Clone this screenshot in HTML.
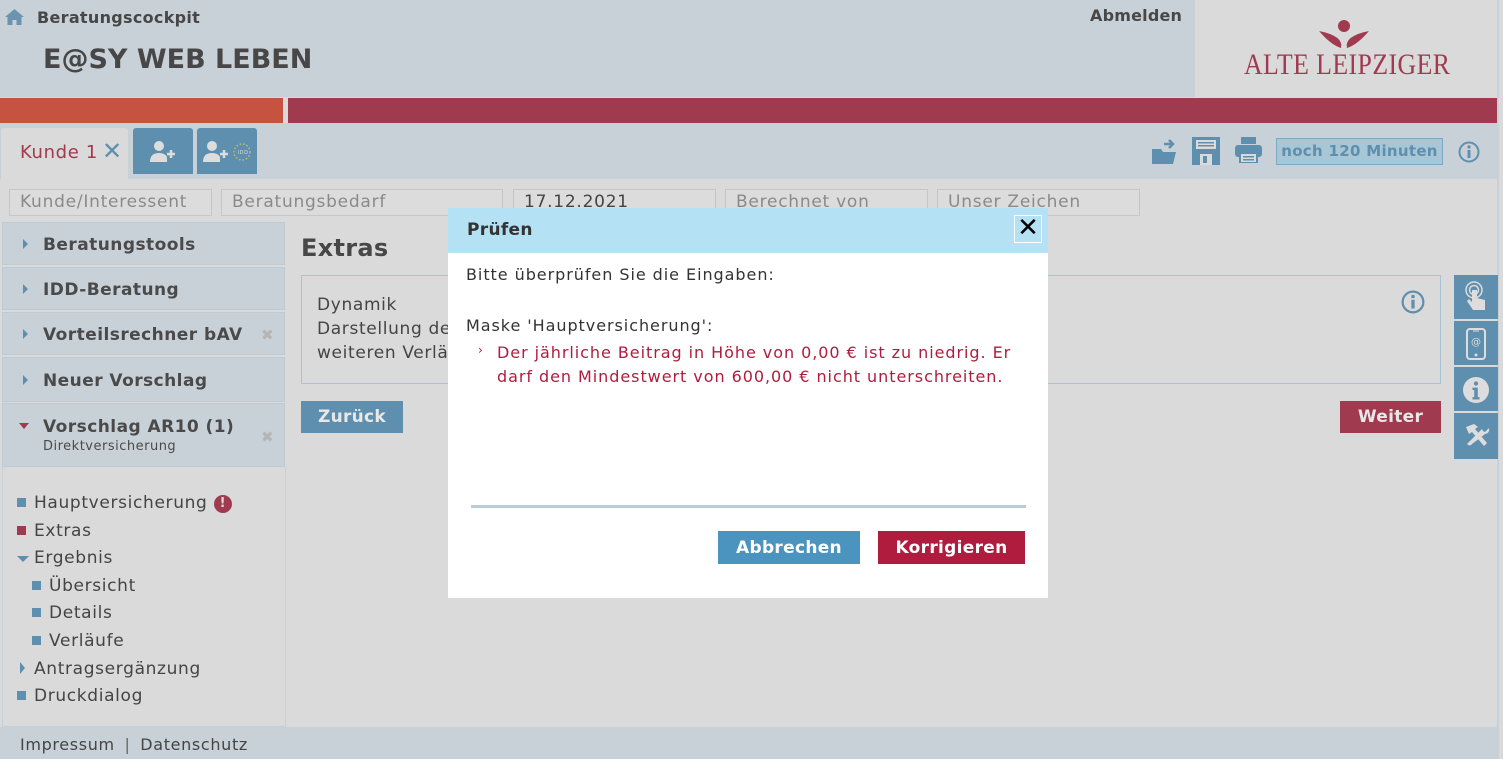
<!DOCTYPE html>
<html><head><meta charset="utf-8"><style>
*{box-sizing:border-box;margin:0;padding:0}
body{width:1503px;height:759px;overflow:hidden;background:#dadada;font-family:"DejaVu Sans","Liberation Sans",sans-serif;color:#444;position:relative;letter-spacing:0.65px}
.abs{position:absolute}
.hdr{left:0;top:0;width:1195px;height:97px;background:#c9d1d8}
.logo{left:1195px;top:0;width:303px;height:97px;background:#dadada}
.bar1{left:0;top:98px;width:283px;height:25px;background:#c5533f}
.bar2{left:288px;top:98px;width:1210px;height:25px;background:#a03a4f}
.tabs{left:0;top:123px;width:1498px;height:56px;background:#c9d1d8}
.rline{left:1497px;top:0;width:2px;height:759px;background:#c9d1d8}
.fld{top:189px;height:27px;border:1px solid #c6c6c6;background:#dcdcdc;color:#8a8a8a;font-size:17px;padding:2px 10px;letter-spacing:0.75px}
.acc{left:2px;width:283px;background:#c9d1d8;border:1px solid #bfcad2;font-weight:bold;font-size:17px;color:#4a4a4a;padding-left:40px;letter-spacing:0.45px}
.tri{position:absolute;left:20px;top:14px;width:0;height:0;border-left:5px solid #5e8fae;border-top:5px solid transparent;border-bottom:5px solid transparent}
.x{position:absolute;right:10px;color:#b5b5b5;font-size:15px}
.nav{font-size:17px;color:#444;position:absolute;margin-top:2px}
.sq{display:inline-block;width:9px;height:9px;background:#5e8fae;margin-right:8px;vertical-align:1px}
.btn{font-weight:bold;font-size:17px;color:#e8e8e8;text-align:center;letter-spacing:0.3px}
.side{left:1454px;width:44px;background:#5e8fae;height:44px}
.m{letter-spacing:0.95px}
</style></head><body>
<div class="abs hdr"></div>
<svg class="abs" style="left:5px;top:9px" width="19" height="16" viewBox="0 0 19 16"><path d="M9.5 0L0 8h2.5v8h5v-5h4v5h5V8H19z" fill="#6b94b0"/></svg>
<div class="abs" style="left:37px;top:8px;font-weight:bold;font-size:16px;color:#474747;letter-spacing:0.3px">Beratungscockpit</div>
<div class="abs" style="left:43px;top:44px;font-weight:bold;font-size:27px;color:#474747;letter-spacing:0px">E@SY WEB LEBEN</div>
<div class="abs" style="left:1090px;top:6px;font-weight:bold;font-size:16px;color:#474747;letter-spacing:0.2px">Abmelden</div>
<div class="abs logo"></div>
<svg class="abs" style="left:1315px;top:18px" width="58" height="30" viewBox="0 0 58 30"><circle cx="29" cy="8" r="6" fill="#a03a4f"/><path d="M4 13q25 5 22 17q-10-3-22-17zM54 13q-25 5-22 17q10-3 22-17z" fill="#a03a4f"/></svg>
<div class="abs" style="left:1244px;top:48px;font-family:'Liberation Serif',serif;font-size:30px;color:#a03a4f;letter-spacing:0.5px;transform:scaleX(.86);transform-origin:left;white-space:nowrap">ALTE LEIPZIGER</div>
<div class="abs bar1"></div><div class="abs bar2"></div>
<div class="abs tabs"></div>
<div class="abs rline"></div>
<div class="abs" style="left:1px;top:128px;width:127px;height:51px;background:#dadada;border-radius:3px 3px 0 0"></div>
<div class="abs" style="left:20px;top:142px;font-size:18px;color:#a03a4f">Kunde 1</div>
<div class="abs" style="left:102px;top:137px;font-size:24px;color:#5e8fae">✕</div>
<div class="abs" style="left:133px;top:128px;width:60px;height:46px;background:#5e8fae;border-radius:3px 3px 0 0"></div>
<div class="abs" style="left:197px;top:128px;width:60px;height:46px;background:#5e8fae;border-radius:3px 3px 0 0"></div>
<svg class="abs" style="left:150px;top:140px" width="26" height="22" viewBox="0 0 26 22"><circle cx="9" cy="6" r="5" fill="#ddd"/><path d="M0 22q0-9 9-9q6 0 8 4v5z" fill="#ddd"/><path d="M17 14h8M21 10v8" stroke="#ddd" stroke-width="2.5"/></svg>
<svg class="abs" style="left:203px;top:140px" width="50" height="22" viewBox="0 0 50 22"><circle cx="9" cy="6" r="5" fill="#ddd"/><path d="M0 22q0-9 9-9q6 0 8 4v5z" fill="#ddd"/><path d="M17 14h8M21 10v8" stroke="#ddd" stroke-width="2.5"/><circle cx="39" cy="12" r="8" fill="none" stroke="#c8c070" stroke-width="1.4" stroke-dasharray="1.5 2"/><text x="34.5" y="14" font-size="5" fill="#ddd">IDD</text></svg>
<svg class="abs" style="left:1152px;top:137px" width="26" height="27" viewBox="0 0 26 27"><path d="M0 12h9l2 3h13l-3 12H0z" fill="#5e8fae"/><path d="M12 7h8M17 3l4 4-4 4" stroke="#5e8fae" stroke-width="2.5" fill="none"/></svg>
<svg class="abs" style="left:1192px;top:137px" width="28" height="28" viewBox="0 0 28 28"><path d="M0 0h28v28H0z" fill="#5e8fae"/><rect x="4" y="3" width="20" height="9" fill="#dadada"/><rect x="6" y="5" width="16" height="1.5" fill="#5e8fae"/><rect x="6" y="8" width="16" height="1.5" fill="#5e8fae"/><rect x="8" y="17" width="12" height="11" fill="#dadada"/><rect x="11" y="19" width="4" height="7" fill="#5e8fae"/></svg>
<svg class="abs" style="left:1235px;top:137px" width="27" height="26" viewBox="0 0 27 26"><rect x="6" y="0" width="15" height="7" fill="#5e8fae"/><rect x="0" y="8" width="27" height="12" rx="3" fill="#5e8fae"/><rect x="5" y="16" width="17" height="10" fill="#dadada" stroke="#5e8fae" stroke-width="2"/><rect x="8" y="19" width="11" height="1.5" fill="#5e8fae"/><rect x="8" y="22" width="11" height="1.5" fill="#5e8fae"/></svg>
<div class="abs" style="left:1276px;top:138px;width:167px;height:27px;background:#a7c6d6;border:1px solid #7fa9c2;color:#5e8fae;font-weight:bold;font-size:15px;text-align:center;line-height:25px;letter-spacing:0.3px">noch 120 Minuten</div>
<svg class="abs" style="left:1458px;top:141px" width="22" height="22" viewBox="0 0 22 22"><circle cx="11" cy="11" r="9.5" fill="none" stroke="#5e8fae" stroke-width="2"/><circle cx="11" cy="6" r="1.6" fill="#5e8fae"/><rect x="9.5" y="9" width="3" height="8" fill="#5e8fae"/></svg>

<div class="abs fld" style="left:9px;width:203px">Kunde/Interessent</div>
<div class="abs fld" style="left:221px;width:282px">Beratungsbedarf</div>
<div class="abs fld" style="left:513px;width:203px;color:#444">17.12.2021</div>
<div class="abs fld" style="left:725px;width:203px">Berechnet von</div>
<div class="abs fld" style="left:937px;width:203px">Unser Zeichen</div>

<div class="abs acc" style="top:222px;height:43px;line-height:45px"><span class="tri" style="top:16px"></span>Beratungstools</div>
<div class="abs acc" style="top:267px;height:43px;line-height:45px"><span class="tri" style="top:16px"></span>IDD-Beratung</div>
<div class="abs acc" style="top:312px;height:43px;line-height:45px"><span class="tri" style="top:16px"></span>Vorteilsrechner bAV<span class="x">✖</span></div>
<div class="abs acc" style="top:357px;height:45px;line-height:47px"><span class="tri" style="top:17px"></span>Neuer Vorschlag</div>
<div class="abs acc" style="top:403px;height:64px;padding-top:13px"><span style="position:absolute;left:16px;top:19px;border-top:6px solid #a03a4f;border-left:5px solid transparent;border-right:5px solid transparent"></span>Vorschlag AR10 (1)<div style="font-weight:normal;font-size:13px;margin-top:2px;letter-spacing:0.5px">Direktversicherung</div><span class="x" style="top:24px">✖</span></div>
<div class="abs" style="left:2px;top:467px;width:284px;height:260px;border:1px solid #c6d0d8;border-top:none"></div>
<div class="nav" style="left:17px;top:491px"><span class="sq"></span>Hauptversicherung <span style="display:inline-block;width:18px;height:18px;border-radius:50%;background:#a03a4f;color:#ddd;font-size:13px;text-align:center;line-height:18px;font-weight:bold;vertical-align:1px;letter-spacing:0">!</span></div>
<div class="nav" style="left:17px;top:519px"><span class="sq" style="background:#a03a4f"></span>Extras</div>
<div class="nav" style="left:17px;top:546px"><span style="display:inline-block;border-top:6px solid #5e8fae;border-left:6px solid transparent;border-right:6px solid transparent;margin-right:5px;vertical-align:1px"></span>Ergebnis</div>
<div class="nav" style="left:32px;top:574px"><span class="sq"></span>Übersicht</div>
<div class="nav" style="left:32px;top:601px"><span class="sq"></span>Details</div>
<div class="nav" style="left:32px;top:629px"><span class="sq"></span>Verläufe</div>
<div class="nav" style="left:20px;top:657px"><span style="display:inline-block;border-left:5px solid #5e8fae;border-top:6px solid transparent;border-bottom:6px solid transparent;margin-right:9px;vertical-align:0px"></span>Antragsergänzung</div>
<div class="nav" style="left:17px;top:684px"><span class="sq"></span>Druckdialog</div>
<div class="abs" style="left:0;top:727px;width:1498px;height:32px;background:#c9d1d8"></div>
<div class="abs" style="left:20px;top:735px;font-size:16px;color:#444">Impressum <span style="color:#666;margin:0 4px">|</span> Datenschutz</div>

<div class="abs" style="left:301px;top:234px;font-weight:bold;font-size:24px;color:#474747;letter-spacing:0.3px">Extras</div>
<div class="abs" style="left:301px;top:275px;width:1140px;height:109px;border:1px solid #a8c3d3;background:#dadada"></div>
<div class="abs" style="left:317px;top:293px;font-size:17px;line-height:24px;color:#444">Dynamik<br>Darstellung de<br>weiteren Verlä</div>
<svg class="abs" style="left:1401px;top:290px" width="24" height="24" viewBox="0 0 22 22"><circle cx="11" cy="11" r="9.5" fill="none" stroke="#5e8fae" stroke-width="2"/><circle cx="11" cy="6" r="1.6" fill="#5e8fae"/><rect x="9.5" y="9" width="3" height="8" fill="#5e8fae"/></svg>
<div class="abs btn" style="left:301px;top:401px;width:102px;height:32px;line-height:32px;background:#5e8fae">Zurück</div>
<div class="abs btn" style="left:1340px;top:401px;width:101px;height:32px;line-height:32px;background:#a03a4f">Weiter</div>
<div class="abs side" style="top:275px"></div>
<div class="abs side" style="top:321px"></div>
<div class="abs side" style="top:367px"></div>
<div class="abs side" style="top:413px;height:46px"></div>
<svg class="abs" style="left:1464px;top:280px" width="24" height="34" viewBox="0 0 24 34"><circle cx="10" cy="10" r="8" fill="none" stroke="#ddd" stroke-width="1.5"/><circle cx="10" cy="10" r="4.5" fill="none" stroke="#ddd" stroke-width="1.5"/><path d="M8 10v12l-3-3-2 2 6 9h12v-10l-8-2v-8z" fill="#ddd"/></svg>
<svg class="abs" style="left:1466px;top:328px" width="20" height="32" viewBox="0 0 20 32"><rect x="1" y="1" width="18" height="30" rx="3" fill="none" stroke="#ddd" stroke-width="2"/><rect x="7" y="2.5" width="6" height="1" fill="#ddd"/><circle cx="10" cy="27" r="1.5" fill="#ddd"/><text x="5" y="17" font-size="10" fill="#ddd">@</text></svg>
<svg class="abs" style="left:1463px;top:377px" width="26" height="26" viewBox="0 0 22 22"><circle cx="11" cy="11" r="11" fill="#ddd"/><circle cx="11" cy="5.5" r="1.8" fill="#5e8fae"/><path d="M8 9h4.5v8H14v2H8v-2h1.5v-6H8z" fill="#5e8fae"/></svg>
<svg class="abs" style="left:1462px;top:423px" width="28" height="24" viewBox="0 0 28 24"><path d="M4 4l8-3 4 3-3 2 12 14-3 3L10 9 7 11z" fill="#ddd"/><path d="M24 2l-4 4 1 2 2 1 4-4q1 5-4 6L10 21q-2 3-5 0z" fill="#ddd"/></svg>

<div class="abs" style="left:448px;top:208px;width:600px;height:390px;background:#fff"></div>
<div class="abs" style="left:448px;top:208px;width:600px;height:45px;background:#b5e1f4"></div>
<div class="abs" style="left:467px;top:220px;font-weight:bold;font-size:17px;color:#333;letter-spacing:0.3px">Prüfen</div>
<div class="abs" style="left:1014px;top:215px;width:28px;height:28px;border:1px solid #fff;font-size:26px;line-height:25px;text-align:center;color:#000;letter-spacing:0">✕</div>
<div class="abs m" style="left:466px;top:265px;font-size:16px;color:#333">Bitte überprüfen Sie die Eingaben:</div>
<div class="abs m" style="left:466px;top:316px;font-size:16px;color:#333">Maske 'Hauptversicherung':</div>
<div class="abs" style="left:478px;top:343px;font-size:12px;color:#b01c3d">›</div>
<div class="abs m" style="left:497px;top:341px;width:545px;font-size:16px;line-height:24px;color:#b01c3d">Der jährliche Beitrag in Höhe von 0,00 € ist zu niedrig. Er darf den Mindestwert von 600,00 € nicht unterschreiten.</div>
<div class="abs" style="left:471px;top:505px;width:555px;height:3px;background:#b9cbd6"></div>
<div class="abs btn" style="left:718px;top:531px;width:142px;height:33px;line-height:34px;background:#4b94c0;color:#fff">Abbrechen</div>
<div class="abs btn" style="left:878px;top:531px;width:147px;height:33px;line-height:34px;background:#b01c3d;color:#fff">Korrigieren</div>
</body></html>
